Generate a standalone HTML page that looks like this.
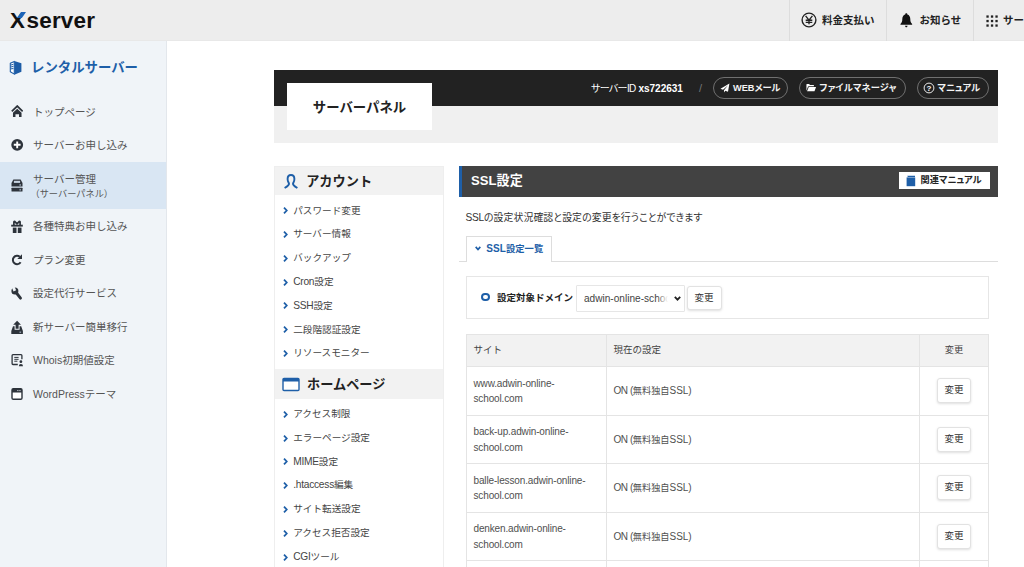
<!DOCTYPE html>
<html lang="ja">
<head>
<meta charset="utf-8">
<title>SSL設定 - サーバーパネル</title>
<style>
*{box-sizing:border-box;margin:0;padding:0}
html,body{width:1024px;height:567px;overflow:hidden;background:#fff}
body{font-family:"Liberation Sans","Noto Sans CJK JP",sans-serif;color:#333;font-size:11px;position:relative}
.abs{position:absolute}
/* top header */
#hdr{position:absolute;left:0;top:0;width:1024px;height:41px;background:#ededed;border-bottom:1px solid #e8e8e8}
#logo .xb{position:absolute;left:9.300px;top:4.900px;width:5px;height:5.800px;background:#1c63b7;transform:skewX(-35deg)}
#logo{position:absolute;left:10px;top:0;height:41px;font-weight:bold;color:#111;white-space:nowrap}
#logo .x{position:absolute;left:0;top:7.300px;font-size:22.300px;line-height:27px}
#logo .sv{position:absolute;left:16.600px;top:6.200px;font-size:22.500px;line-height:29px;letter-spacing:0.150px}
.hitem{position:absolute;top:0;height:41px;border-left:1px solid #ddd;font-weight:bold;font-size:10.5px;color:#222;line-height:41px;white-space:nowrap}
/* sidebar */
#side{position:absolute;left:0;top:41px;width:167px;height:526px;background:#f0f4f8;border-right:1px solid #e3e7ec}
#side .ttl{position:absolute;left:31px;top:16px;font-size:13.4px;font-weight:bold;color:#1e5fa8;line-height:22px;white-space:nowrap}
.sitem{position:absolute;left:0;width:166px;height:33.600px;font-size:10.500px;color:#555;white-space:nowrap}
.sitem span{position:absolute;left:33px;top:9px;line-height:16px}
.sitem svg{position:absolute;left:10px;top:10px}
.sitem.act{background:#d9e6f3}
/* main */
#bar{position:absolute;left:274px;top:70px;width:723.600px;height:36.400px;background:#222}
#bar2{position:absolute;left:274px;top:106.400px;width:723.600px;height:36.400px;background:#f0f0f0}
#plogo{position:absolute;left:287px;top:83px;width:145px;height:46.800px;background:#fff;text-align:center;font-weight:bold;font-size:13.400px;line-height:49px;color:#222}
.pill{position:absolute;top:77px;height:22px;border:1px solid #707070;border-radius:11px;color:#f4f4f4;font-size:9.200px;font-feature-settings:"palt";font-weight:bold;line-height:21px;white-space:nowrap}
/* left menu */
#menu{position:absolute;left:274px;top:166px;width:170px;height:420px;border:1px solid #eee;background:#fff}
.mh{position:absolute;left:0;width:168px;height:28px;background:#f2f2f2;font-weight:bold;font-size:13.200px;color:#222;line-height:28px}
.mi{position:absolute;left:18.200px;font-size:9.650px;color:#444;line-height:16px;white-space:nowrap}
.mi svg{position:absolute;left:-10px;top:4.800px}
.mi b{font-weight:normal;font-size:10.200px;letter-spacing:-.25px}
/* content */
#chead{position:absolute;left:459.100px;top:166px;width:538.500px;height:30.500px;background:#424242;border-left:3.200px solid #1e5fa8;color:#fff;font-weight:bold;font-size:13.100px;line-height:30px;padding-left:9px}
table{border-collapse:collapse}
#tbl th,#tbl td{border:1px solid #e4e4e4;font-size:9.500px;color:#505050;font-weight:normal;padding:0 0 0 6.500px;line-height:15.500px;vertical-align:middle;white-space:nowrap}
#tbl tr.th th{height:32px;background:#f2f2f2;color:#444;padding-bottom:1px}
#tbl td{height:48.5px}
#tbl td.c1{font-size:10px;letter-spacing:-.14px;padding-top:0.800px;padding-bottom:0}
#tbl td.c2{font-size:9.200px;padding-top:1.600px}
#tbl td.c2 i{font-style:normal;font-size:10px;letter-spacing:-.45px}
#tbl td.c2 i+i{letter-spacing:-.05px}
.btn{border:1px solid #e2e2e2;border-radius:3px;background:#fff;box-shadow:0 1px 2.500px rgba(0,0,0,.13);font-size:9.500px;color:#333;text-align:center;white-space:nowrap}
</style>
</head>
<body>
<div id="hdr">
  <div id="logo"><span class="x">X<i class="xb"></i></span><span class="sv">server</span></div>
  <div class="hitem" style="left:789px;width:98px">
    <svg class="abs" style="left:10.600px;top:12.400px" width="16" height="16" viewBox="0 0 16 16"><circle cx="8" cy="8" r="6.900" fill="none" stroke="#222" stroke-width="1.400"/><path d="M4.600 3.900 L8 8.100 L11.400 3.900 M8 8.100 V12.300 M4.700 8.200 H11.300 M4.700 10.300 H11.300" fill="none" stroke="#222" stroke-width="1.350"/></svg>
    <span class="abs" style="left:32px;top:0">料金支払い</span>
  </div>
  <div class="hitem" style="left:886px;width:88px">
    <svg class="abs" style="left:12px;top:12.200px" width="14.600" height="17" viewBox="0 0 15 16" preserveAspectRatio="none"><path d="M7.5 1.2c.7 0 1.1.5 1.1 1.100 2 .5 3 2.200 3 4.300 0 2.400.6 3.700 1.900 4.700v.7H1.500v-.7c1.300-1 1.900-2.300 1.900-4.700 0-2.100 1-3.800 3-4.300 0-.6.400-1.100 1.100-1.100z" fill="#111"/><path d="M6.200 12.900h2.600c0 .8-.6 1.400-1.300 1.400s-1.300-.6-1.300-1.400z" fill="#111"/></svg>
    <span class="abs" style="left:32.500px;top:0">お知らせ</span>
  </div>
  <div class="hitem" style="left:973px;width:60px">
    <svg class="abs" style="left:12px;top:14.500px" width="13" height="13" viewBox="0 0 13 13" fill="#222"><rect x="0.4" y="0.4" width="2.300" height="2.300"/><rect x="4.9" y="0.4" width="2.300" height="2.300"/><rect x="9.4" y="0.4" width="2.300" height="2.300"/><rect x="0.4" y="4.9" width="2.300" height="2.300"/><rect x="4.9" y="4.9" width="2.300" height="2.300"/><rect x="9.4" y="4.9" width="2.300" height="2.300"/><rect x="0.4" y="9.4" width="2.300" height="2.300"/><rect x="4.9" y="9.4" width="2.300" height="2.300"/><rect x="9.4" y="9.4" width="2.300" height="2.300"/></svg>
    <span class="abs" style="left:29px;top:0">サービス</span>
  </div>
</div>
<div id="side">
  <svg class="abs" style="left:9.300px;top:18.800px" width="14" height="16" viewBox="0 0 14 16"><path d="M5.300 0.900 L12.400 3.300 V11.800 L5.300 14.700 Z" fill="#1d5ca6"/><path d="M5.300 1.400 L1.300 3.300 V11.700 L5.300 14.100 Z" fill="#fff" stroke="#1d5ca6" stroke-width="1.100" stroke-linejoin="round"/><path d="M1.800 5.100 L4.400 4.300 M1.800 7 L4.400 6.400 M1.800 8.900 L4.400 8.500" stroke="#1d5ca6" stroke-width="1" fill="none"/></svg>
  <div class="ttl">レンタルサーバー</div>

  <div class="sitem" style="top:53.500px">
    <svg style="left:10.600px;top:10.400px" width="12.500" height="12.500" viewBox="0 0 14 14"><path d="M0.900 7.200 L7 1.200 L13.100 7.200" fill="none" stroke="#2d333b" stroke-width="2"/><path d="M7 4.100 L11.800 8.800 V13.500 H9 V10.300 H5 V13.500 H2.200 V8.800 Z" fill="#2d333b"/></svg>
    <span>トップページ</span>
  </div>
  <div class="sitem" style="top:87.100px">
    <svg width="14" height="14" viewBox="0 0 14 14"><circle cx="7.200" cy="6.800" r="5.900" fill="#2d333b"/><path d="M7.200 3.400 V10.200 M3.800 6.800 H10.600" stroke="#fff" stroke-width="1.900"/></svg>
    <span>サーバーお申し込み</span>
  </div>
  <div class="sitem act" style="top:120.700px;height:47.200px">
    <svg style="top:16.400px;left:10.200px" width="14" height="15" viewBox="0 0 14 15"><path d="M3.400 1.400 H10.600 L12.500 5 V8.500 H1.500 V5 Z" fill="#2d333b"/><rect x="3.900" y="2.800" width="6.200" height="2.100" fill="#c6d3e1"/><rect x="9.400" y="6.100" width="1.600" height="1.700" fill="#8a97a6"/><rect x="1.500" y="9.800" width="11" height="3.800" rx="0.400" fill="#2d333b"/><rect x="9.400" y="10.900" width="1.600" height="1.700" fill="#8a97a6"/></svg>
    <span style="top:9px">サーバー管理</span>
    <span style="top:24px;left:30.500px;font-size:9.200px">（サーバーパネル）</span>
  </div>
  <div class="sitem" style="top:167.900px">
    <svg style="left:10.200px;top:10.700px" width="14" height="14" viewBox="0 0 14 14"><path d="M3.900 5 V2.100 Q3.900 1 4.900 1.600 L7 3.900 L9.100 1.600 Q10.100 1 10.100 2.100 V5" fill="none" stroke="#2d333b" stroke-width="1.700" stroke-linejoin="round"/><rect x="1.200" y="4.700" width="11.600" height="1.900" fill="#2d333b"/><rect x="2.800" y="7.600" width="3.700" height="5.400" fill="#2d333b"/><rect x="7.800" y="7.600" width="3.700" height="5.400" fill="#2d333b"/></svg>
    <span>各種特典お申し込み</span>
  </div>
  <div class="sitem" style="top:201.500px">
    <svg width="14" height="14" viewBox="0 0 14 14"><path d="M10.600 9.300 A4.200 4.200 0 1 1 9.800 3.800" fill="none" stroke="#2d333b" stroke-width="2"/><path d="M12 1.300 V6 H7.300 Z" fill="#2d333b"/></svg>
    <span>プラン変更</span>
  </div>
  <div class="sitem" style="top:235.100px">
    <svg style="left:10px;top:9.900px" width="14" height="16" viewBox="0 0 14 16"><circle cx="4.900" cy="5" r="3.500" fill="#2d333b"/><path d="M4.900 5 L10.500 12.100" stroke="#2d333b" stroke-width="2.900" stroke-linecap="round" fill="none"/><path d="M4.800 4.900 L2.900 0.300" stroke="#f0f4f8" stroke-width="2.800" fill="none"/></svg>
    <span>設定代行サービス</span>
  </div>
  <div class="sitem" style="top:268.700px">
    <svg width="14" height="16" viewBox="0 0 14 16" style="top:10.400px"><path d="M7.100 0.800 L11 4.700 H8.600 V8.800 H5.600 V4.700 H3.200 Z" fill="#2d333b"/><path d="M3 6.300 H4.600 V9.800 H9.600 V6.300 H11.200 L12.900 11 V13.900 H1.300 V11 Z" fill="#2d333b"/><rect x="9.500" y="11.500" width="1.600" height="1.500" fill="#8a97a6"/></svg>
    <span>新サーバー簡単移行</span>
  </div>
  <div class="sitem" style="top:302.300px">
    <svg width="15" height="16" viewBox="0 0 15 16" style="top:9px"><path d="M7.800 12.500 H3 Q2.100 12.500 2.100 11.600 V3.600 Q2.100 2.700 3 2.700 H11 Q11.900 2.700 11.900 3.600 V7.300" fill="none" stroke="#2d333b" stroke-width="1.300"/><path d="M4.300 5.400 H8.600 M4.300 7.300 H8.600 M4.300 9.200 H7.400" stroke="#2d333b" stroke-width="1" fill="none"/><circle cx="10.900" cy="9.700" r="1.400" fill="#2d333b"/><path d="M8.800 14.200 Q8.800 12.100 10.900 12.100 Q13 12.100 13 14.200 Z" fill="#2d333b"/></svg>
    <span>Whois初期値設定</span>
  </div>
  <div class="sitem" style="top:335.900px">
    <svg width="14" height="16" viewBox="0 0 14 16" style="top:9px"><rect x="2" y="2.700" width="10" height="10.600" rx="1.300" fill="#fff" stroke="#2d333b" stroke-width="1.400"/><path d="M2 4 Q2 2.700 3.300 2.700 H10.700 Q12 2.700 12 4 V6.500 H2 Z" fill="#2d333b"/><rect x="7.300" y="4" width="1.100" height="1.100" fill="#cfd6dd"/><rect x="9.400" y="4" width="1.100" height="1.100" fill="#cfd6dd"/></svg>
    <span>WordPressテーマ</span>
  </div>
</div>
<div id="bar"></div>
<div id="bar2"></div>
<div id="plogo">サーバーパネル</div>
<div class="abs" style="left:591px;top:70px;height:36px;line-height:37px;color:#fff;font-size:10px;font-feature-settings:'palt';white-space:nowrap"><span style="letter-spacing:-0.650px">サーバーID</span> <b style="font-size:10.100px;letter-spacing:-.05px">xs722631</b></div>
<div class="abs" style="left:699px;top:70px;height:36px;line-height:36px;color:#777;font-size:11px">/</div>
<div class="pill" style="left:712.800px;width:75.500px"><svg class="abs" style="left:6px;top:5px" width="10" height="10" viewBox="0 0 12 12"><path d="M11.300 0.600 L9.600 10.600 L6.300 9.200 L4.800 11.400 V8.600 L9.600 2.600 L3.600 8.100 L0.600 6.900 Z" fill="#fff"/></svg><span class="abs" style="left:19.200px">WEBメール</span></div>
<div class="pill" style="left:798.700px;width:107.200px"><svg class="abs" style="left:6.800px;top:4.800px" width="10.400" height="9.400" viewBox="0 0 12 10" preserveAspectRatio="none"><path d="M0.500 8.200 V1.600 Q0.500 1 1.100 1 H3.600 L4.600 2.100 H8.600 Q9.200 2.100 9.200 2.700 V3.500 H3 Q2.400 3.500 2.200 4 Z" fill="#fff"/><path d="M3.200 4.300 H11.600 L9.800 8.800 H1.200 Z" fill="#fff"/></svg><span class="abs" style="left:19.700px;letter-spacing:.2px">ファイルマネージャ</span></div>
<div class="pill" style="left:916.900px;width:72px"><svg class="abs" style="left:5px;top:4px" width="12" height="12" viewBox="0 0 12 12"><circle cx="6" cy="6" r="4.900" fill="none" stroke="#fff" stroke-width="0.900"/><text x="6" y="8.800" font-size="8" font-family="Liberation Sans,sans-serif" fill="#fff" text-anchor="middle">?</text></svg><span class="abs" style="left:19.600px">マニュアル</span></div>
<div id="menu">
  <div class="mh" style="top:0"><svg class="abs" style="left:8px;top:6px" width="16" height="17" viewBox="0 0 16 17"><path d="M8 2 C5.600 2 4.600 3.800 4.600 6 C4.600 8.600 5.800 9.800 6 10.600 C6.200 11.800 4 13.600 1.600 15 M8 2 C10.400 2 11.400 3.800 11.400 6 C11.400 8.600 10.200 9.800 10 10.600 C9.800 11.800 12 13.600 14.400 15" fill="none" stroke="#1e5fa8" stroke-width="1.900"/></svg><span class="abs" style="left:31.200px;top:0.600px">アカウント</span></div>
  <div class="mi" style="top:35.5px"><svg width="5" height="7" viewBox="0 0 5 7"><path d="M1 0.700 L3.700 3.500 L1 6.300" fill="none" stroke="#1e5fa8" stroke-width="1.800"/></svg>パスワード変更</div>
  <div class="mi" style="top:59.3px"><svg width="5" height="7" viewBox="0 0 5 7"><path d="M1 0.700 L3.700 3.500 L1 6.300" fill="none" stroke="#1e5fa8" stroke-width="1.800"/></svg>サーバー情報</div>
  <div class="mi" style="top:83.1px"><svg width="5" height="7" viewBox="0 0 5 7"><path d="M1 0.700 L3.700 3.500 L1 6.300" fill="none" stroke="#1e5fa8" stroke-width="1.800"/></svg>バックアップ</div>
  <div class="mi" style="top:106.9px"><svg width="5" height="7" viewBox="0 0 5 7"><path d="M1 0.700 L3.700 3.500 L1 6.300" fill="none" stroke="#1e5fa8" stroke-width="1.800"/></svg><b>Cron</b>設定</div>
  <div class="mi" style="top:130.7px"><svg width="5" height="7" viewBox="0 0 5 7"><path d="M1 0.700 L3.700 3.500 L1 6.300" fill="none" stroke="#1e5fa8" stroke-width="1.800"/></svg><b>SSH</b>設定</div>
  <div class="mi" style="top:154.5px"><svg width="5" height="7" viewBox="0 0 5 7"><path d="M1 0.700 L3.700 3.500 L1 6.300" fill="none" stroke="#1e5fa8" stroke-width="1.800"/></svg>二段階認証設定</div>
  <div class="mi" style="top:178.3px"><svg width="5" height="7" viewBox="0 0 5 7"><path d="M1 0.700 L3.700 3.500 L1 6.300" fill="none" stroke="#1e5fa8" stroke-width="1.800"/></svg>リソースモニター</div>
  <div class="mh" style="top:202.200px;height:29.800px"><svg class="abs" style="left:7.300px;top:7.700px" width="18" height="15" viewBox="0 0 18 15"><rect x="1" y="1.500" width="16" height="12" rx="1" fill="#fff" stroke="#1e5fa8" stroke-width="1.400"/><rect x="1" y="1.500" width="16" height="3" fill="#1e5fa8"/></svg><span class="abs" style="left:32px;top:2.200px">ホームページ</span></div>
  <div class="mi" style="top:239.0px"><svg width="5" height="7" viewBox="0 0 5 7"><path d="M1 0.700 L3.700 3.500 L1 6.300" fill="none" stroke="#1e5fa8" stroke-width="1.800"/></svg>アクセス制限</div>
  <div class="mi" style="top:262.8px"><svg width="5" height="7" viewBox="0 0 5 7"><path d="M1 0.700 L3.700 3.500 L1 6.300" fill="none" stroke="#1e5fa8" stroke-width="1.800"/></svg>エラーページ設定</div>
  <div class="mi" style="top:286.6px"><svg width="5" height="7" viewBox="0 0 5 7"><path d="M1 0.700 L3.700 3.500 L1 6.300" fill="none" stroke="#1e5fa8" stroke-width="1.800"/></svg><b>MIME</b>設定</div>
  <div class="mi" style="top:310.4px"><svg width="5" height="7" viewBox="0 0 5 7"><path d="M1 0.700 L3.700 3.500 L1 6.300" fill="none" stroke="#1e5fa8" stroke-width="1.800"/></svg><b>.htaccess</b>編集</div>
  <div class="mi" style="top:334.2px"><svg width="5" height="7" viewBox="0 0 5 7"><path d="M1 0.700 L3.700 3.500 L1 6.300" fill="none" stroke="#1e5fa8" stroke-width="1.800"/></svg>サイト転送設定</div>
  <div class="mi" style="top:358.0px"><svg width="5" height="7" viewBox="0 0 5 7"><path d="M1 0.700 L3.700 3.500 L1 6.300" fill="none" stroke="#1e5fa8" stroke-width="1.800"/></svg>アクセス拒否設定</div>
  <div class="mi" style="top:381.8px"><svg width="5" height="7" viewBox="0 0 5 7"><path d="M1 0.700 L3.700 3.500 L1 6.300" fill="none" stroke="#1e5fa8" stroke-width="1.800"/></svg><b>CGI</b>ツール</div>
</div>
<div id="chead">SSL設定</div>
<div class="abs" style="left:899px;top:172px;width:90.500px;height:16.800px;background:#fff;font-size:9.200px;font-feature-settings:'palt';font-weight:bold;color:#222;line-height:16.800px;white-space:nowrap"><svg class="abs" style="left:7px;top:2.800px" width="10" height="12" viewBox="0 0 10 12"><path d="M1.300 0.800 H9 V2 H1.800 Z" fill="#1e5fa8"/><rect x="0.600" y="2.400" width="8.600" height="8.800" fill="#1e5fa8"/></svg><span class="abs" style="left:21.500px;top:0">関連マニュアル</span></div>
<div class="abs" style="left:465.500px;top:210.300px;font-size:9.900px;font-feature-settings:'palt';letter-spacing:.1px;color:#333;line-height:16px;white-space:nowrap"><span style="font-size:10.200px;letter-spacing:-.3px">SSL</span>の設定状況確認と設定の変更を行うことができます</div>
<div class="abs" style="left:459px;top:261px;width:538.600px;height:1px;background:#ddd"></div>
<div class="abs" style="left:466px;top:235.500px;width:85.500px;height:26.500px;background:#fff;border:1px solid #ddd;border-bottom:none;font-size:9.300px;font-weight:bold;color:#1e5fa8;line-height:25px;white-space:nowrap"><svg class="abs" style="left:7.600px;top:9px" width="6" height="5" viewBox="0 0 6 5"><path d="M0.700 0.900 L3 3.500 L5.300 0.900" fill="none" stroke="#1e5fa8" stroke-width="1.700"/></svg><span class="abs" style="left:19.300px;top:-1px;letter-spacing:.05px"><span style="font-size:10px">SSL</span>設定一覧</span></div>
<div class="abs" style="left:466px;top:276px;width:523px;height:43.200px;border:1px solid #e6e6e6;background:#fff">
  <i class="abs" style="left:14.300px;top:15.800px;width:8.600px;height:8.600px;border:2.200px solid #1e5fa8;border-radius:50%"></i>
  <span class="abs" style="left:30px;top:13px;font-size:9.500px;font-weight:bold;color:#222;line-height:16px;white-space:nowrap">設定対象ドメイン</span>
  <div class="abs" style="left:109px;top:8px;width:109px;height:26.600px;border:1px solid #e6e6e6;border-radius:1px;background:#fff;font-size:10.100px;line-height:26.400px;color:#444;overflow:hidden;white-space:nowrap"><span class="abs" style="left:7px;top:0;width:83.500px;overflow:hidden">adwin-online-school.com</span><i class="abs" style="left:80px;top:2px;width:11px;height:20px;background:linear-gradient(90deg,rgba(255,255,255,0),#fff)"></i><svg class="abs" style="left:96.800px;top:9.600px" width="7" height="5" viewBox="0 0 7 5"><path d="M0.800 0.800 L3.500 3.600 L6.200 0.800" fill="none" stroke="#222" stroke-width="1.800"/></svg></div>
  <div class="btn abs" style="left:219.500px;top:9px;width:35px;height:24.200px;line-height:22.600px">変更</div>
</div>
<table class="abs" id="tbl" style="left:466px;top:334px;width:523px">
<tr class="th"><th style="width:140px;text-align:left">サイト</th><th style="text-align:left">現在の設定</th><th style="width:69px;text-align:center;padding:0;font-size:9.200px">変更</th></tr>
<tr><td class="c1">www.adwin-online-<br>school.com</td><td class="c2"><i>ON (</i>無料独自<i>SSL)</i></td><td style="text-align:center;padding:0"><span class="btn" style="display:inline-block;width:34.800px;height:24.800px;line-height:22.800px;vertical-align:middle">変更</span></td></tr>
<tr><td class="c1">back-up.adwin-online-<br>school.com</td><td class="c2"><i>ON (</i>無料独自<i>SSL)</i></td><td style="text-align:center;padding:0"><span class="btn" style="display:inline-block;width:34.800px;height:24.800px;line-height:22.800px;vertical-align:middle">変更</span></td></tr>
<tr><td class="c1">balle-lesson.adwin-online-<br>school.com</td><td class="c2"><i>ON (</i>無料独自<i>SSL)</i></td><td style="text-align:center;padding:0"><span class="btn" style="display:inline-block;width:34.800px;height:24.800px;line-height:22.800px;vertical-align:middle">変更</span></td></tr>
<tr><td class="c1">denken.adwin-online-<br>school.com</td><td class="c2"><i>ON (</i>無料独自<i>SSL)</i></td><td style="text-align:center;padding:0"><span class="btn" style="display:inline-block;width:34.800px;height:24.800px;line-height:22.800px;vertical-align:middle">変更</span></td></tr>
<tr><td class="c1">&nbsp;</td><td class="c2">&nbsp;</td><td style="padding:0">&nbsp;</td></tr>
</table>

</body>
</html>
